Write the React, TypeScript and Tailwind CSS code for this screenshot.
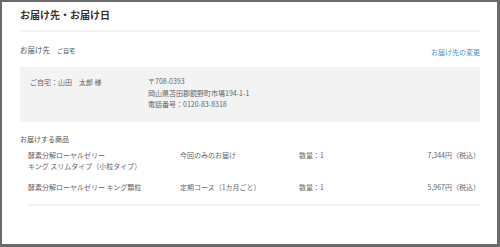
const items = [
  {
    name: ['酵素分解ローヤルゼリー', 'キング スリムタイプ（小粒タイプ）'],
    plan: '今回のみのお届け',
    qty: '数量：1',
    price: '7,344円（税込）',
  },
  {
    name: ['酵素分解ローヤルゼリー キング顆粒'],
    plan: '定期コース（1カ月ごと）',
    qty: '数量：1',
    price: '5,967円（税込）',
  },
];

export default function App() {
  return (
    <div
      className="w-[500px] h-[247px] bg-[#6b6b6b] pt-[2px] pl-[2px] pr-[3px] pb-[3px]"
      style={{ fontFamily: '"Noto Sans CJK JP", "Noto Sans", sans-serif' }}
    >
      <div className="h-full bg-white pl-[18px] pr-[17px] pt-[5px]">
        {/* Title */}
        <h1 className="text-[10px] leading-[16px] font-bold text-[#3d3126]">お届け先・お届け日</h1>
        <div className="mt-[7px] h-[2px] bg-[#f3f3f3]" />

        {/* Destination */}
        <div className="mt-[12px] h-[14px] flex justify-between items-start">
          <div className="flex items-baseline leading-[12px] text-[#555]">
            <span className="text-[7.5px]">お届け先</span>
            <span className="ml-[7px] text-[6px]">ご自宅</span>
          </div>
          <a className="mt-[2px] text-[7px] leading-[12px] text-[#4a8fd6]">お届け先の変更</a>
        </div>

        <div className="mt-[9px] h-[55px] bg-[#f3f3f3] pl-[10px] pt-[9px] flex text-[7px] leading-[11.5px] text-[#666]">
          <div className="w-[118px] pt-[1px]">ご自宅：山田　太郎 様</div>
          <div>
            <div>〒708-0393</div>
            <div>岡山県苫田郡鏡野町市場194-1-1</div>
            <div>電話番号：0120-83-8318</div>
          </div>
        </div>

        {/* Items */}
        <h2 className="mt-[11px] text-[7px] leading-[12px] text-[#555]">お届けする商品</h2>
        <div className="ml-[8px] mt-[5px] pb-[11px] flex flex-col gap-[10px] text-[7px] leading-[11px] text-[#666]">
          {items.map((item, i) => (
            <div key={i} className="grid grid-cols-[152px_119px_1fr_auto]">
              <div>
                {item.name.map((line, j) => (
                  <div key={j}>{line}</div>
                ))}
              </div>
              <div>{item.plan}</div>
              <div>{item.qty}</div>
              <div className="text-right">{item.price}</div>
            </div>
          ))}
        </div>
        <div className="ml-[8px] h-[2px] bg-[#f2f2f2]" />
      </div>
    </div>
  );
}
